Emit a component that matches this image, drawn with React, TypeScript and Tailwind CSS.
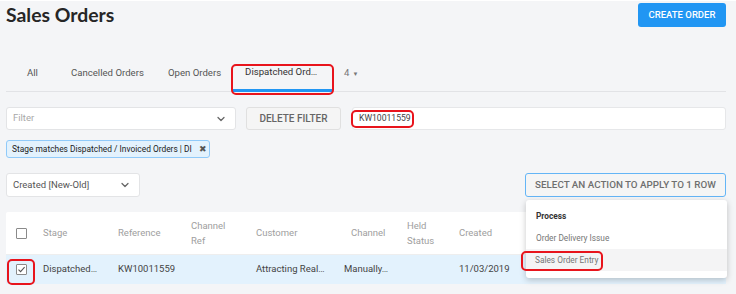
import React from "react";
import { ChevronDown } from "lucide-react";

function Check({ checked }: { checked?: boolean }) {
  return (
    <div className="w-[11px] h-[11px] border border-[#8a8a8a] rounded-[1px] bg-white flex items-center justify-center">
      {checked && (
        <svg width="9" height="9" viewBox="0 0 9 9">
          <path d="M1.5 4.6 L3.6 6.6 L7.6 2.2" fill="none" stroke="#555" strokeWidth="1.1" />
        </svg>
      )}
    </div>
  );
}

export default function App() {
  return (
    <div
      className="relative w-[736px] h-[294px] overflow-hidden bg-[#f4f5f7] border-t border-white text-[#555]"
      style={{ fontFamily: "Roboto, 'Liberation Sans', sans-serif" }}
    >
      {/* header */}
      <div className="flex justify-between items-start pt-[2px] px-[6px] pr-[10px]">
        <h1
          className="text-[19.4px] leading-[24px] font-bold text-[#262626]"
          style={{ fontFamily: "Lato, 'Liberation Sans', sans-serif" }}
        >
          Sales Orders
        </h1>
        <button className="h-[24px] w-[88px] rounded-[3px] bg-[#2196f3] text-white text-[9.5px] font-medium">
          CREATE ORDER
        </button>
      </div>

      {/* tabs */}
      <div className="mt-[30px] mx-[6px] mr-[10px] border-b border-[#e2e3e6] flex h-[35px] text-[9.6px]">
        <div className="w-[53px] flex items-center justify-center pb-[2px]">All</div>
        <div className="px-[12px] flex items-center pb-[2px]">Cancelled Orders</div>
        <div className="px-[12px] flex items-center pb-[2px]">Open Orders</div>
        <div className="w-[100px] pl-[12px] flex items-center pb-[2px] border-b-[3px] border-[#2196f3] text-[#333] -mb-px">
          Dispatched Ord…
        </div>
        <div className="pl-[11px] flex items-center pb-[2px] text-[#777]">
          4 <span className="ml-[3px] text-[6px]">▼</span>
        </div>
      </div>

      {/* filter row */}
      <div className="mt-[15px] mx-[6px] mr-[10px] flex h-[23px] text-[9.5px]">
        <div className="w-[230px] bg-white border border-[#e3e4e6] rounded-[3px] flex items-center justify-between pl-[6px] pr-[8px]">
          <span className="text-[#a8a8a8]">Filter</span>
          <ChevronDown size={12} strokeWidth={2.5} color="#666" />
        </div>
        <button className="ml-[10px] w-[95px] bg-[#f5f5f5] border border-[#e0e0e0] rounded-[3px] text-[#666] font-medium text-[10px]">
          DELETE FILTER
        </button>
        <div className="ml-[11px] flex-1 bg-white border border-[#e6e7e9] rounded-[3px] flex items-center pl-[6px] text-[#444] text-[8.6px]">
          KW10011559
        </div>
      </div>

      {/* chip */}
      <div className="mt-[10px] ml-[6px] w-[204px] h-[18px] bg-[#e3f2fd] border border-[#90caf9] rounded-[3px] flex items-center pl-[5px] text-[8.4px] text-[#222] whitespace-nowrap">
        <span>Stage matches Dispatched / Invoiced Orders | DI</span>
        <span className="ml-[7px] text-[8.5px] text-[#555]">✖</span>
      </div>

      {/* sort / action row */}
      <div className="mt-[15px] mx-[6px] mr-[10px] flex justify-between items-start text-[9.5px]">
        <div className="w-[134px] h-[24px] bg-white border border-[#e3e4e6] rounded-[3px] flex items-center justify-between pl-[6px] pr-[8px] text-[#555]">
          <span>Created [New-Old]</span>
          <ChevronDown size={12} strokeWidth={2.5} color="#666" />
        </div>
        <button className="w-[201px] h-[24px] bg-[#f5f5f5] border border-[#64b5f6] rounded-[3px] text-[#6f6f6f] font-medium text-[9.8px]">
          SELECT AN ACTION TO APPLY TO 1 ROW
        </button>
      </div>

      {/* table */}
      <div className="mt-[15px] mx-[6px] mr-[10px] bg-white rounded-[2px] text-[9.5px]">
        <div className="flex h-[43px] items-center text-[#9e9e9e] border-b border-[#eeeeee]">
          <div className="w-[37px] pl-[10px]"><Check /></div>
          <div className="w-[75px]">Stage</div>
          <div className="w-[73px]">Reference</div>
          <div className="w-[65px] leading-[15px]">Channel<br />Ref</div>
          <div className="w-[88px]">Customer</div>
          <div className="w-[63px] pl-[7px]">Channel</div>
          <div className="w-[52px] leading-[15px]">Held<br />Status</div>
          <div>Created</div>
        </div>
        <div className="flex h-[29px] items-center bg-[#e3f2fd] text-[#444]">
          <div className="w-[37px] pl-[10px]"><Check checked /></div>
          <div className="w-[75px]">Dispatched…</div>
          <div className="w-[73px]">KW10011559</div>
          <div className="w-[65px]"></div>
          <div className="w-[88px]">Attracting Real…</div>
          <div className="w-[63px]">Manually…</div>
          <div className="w-[52px]"></div>
          <div>11/03/2019</div>
        </div>
      </div>

      {/* dropdown menu */}
      <div className="absolute left-[526px] top-[199px] w-[201px] h-[78px] bg-white rounded-[3px] shadow-[0_2px_6px_rgba(0,0,0,0.22)] text-[8.3px] pt-[9px]">
        <div className="pl-[10px] h-[15px] leading-[15px] font-bold text-[#333]">Process</div>
        <div className="pl-[10px] mt-[7px] h-[15px] leading-[15px] text-[#757575]">Order Delivery Issue</div>
        <div className="mt-[3px] h-[22px] bg-[#f4f4f5] pl-[9px] flex items-center text-[#757575]">Sales Order Entry</div>
      </div>

      {/* red annotation outlines */}
      <div className="absolute left-[231px] top-[63px] w-[103px] h-[31px] border-2 border-[#e8141c] rounded-[5px]" />
      <div className="absolute left-[351px] top-[109px] w-[63px] h-[18px] border-2 border-[#e8141c] rounded-[5px]" />
      <div className="absolute left-[7px] top-[258px] w-[28px] h-[26px] border-2 border-[#e8141c] rounded-[5px]" />
      <div className="absolute left-[521px] top-[250px] w-[82px] h-[20px] border-2 border-[#e8141c] rounded-[5px]" />
    </div>
  );
}
